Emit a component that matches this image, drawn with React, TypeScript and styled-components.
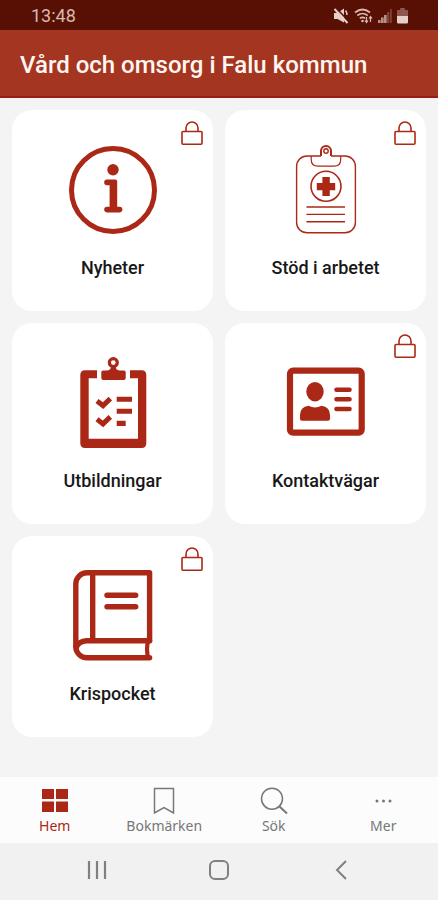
import React from "react";
import styled, { createGlobalStyle } from "styled-components";

const red = "#aa2815";

const GlobalStyle = createGlobalStyle`
  *, *::before, *::after { box-sizing: border-box; }
  body {
    margin: 0;
    background: #f4f4f4;
    font-family: Roboto, "Liberation Sans", sans-serif;
  }
`;

const Page = styled.div`
  min-height: 100vh;
  display: flex;
  flex-direction: column;
`;

const StatusBar = styled.div`
  display: flex;
  align-items: center;
  justify-content: space-between;
  height: 30px;
  padding: 1px 30px 0 31px;
  background: #581004;
  color: #d9b8b0;
  font-size: 18px;
  line-height: 28px;
`;

const StatusIcons = styled.div`
  display: flex;
  align-items: center;
  gap: 5px;
  svg { display: block; }
`;

const Header = styled.header`
  display: flex;
  align-items: center;
  height: 68px;
  padding: 4px 20px 0;
  background: #a43621;
  border-bottom: 2px solid #9c1c10;
`;

const Title = styled.h1`
  margin: 0;
  color: #fff6f2;
  font-size: 24px;
  font-weight: 500;
  line-height: 32px;
  white-space: nowrap;
`;

const Main = styled.main`
  flex: 1;
  padding: 12px;
`;

const Grid = styled.div`
  display: grid;
  grid-template-columns: repeat(2, minmax(0, 1fr));
  gap: 12px;
`;

const Card = styled.a`
  position: relative;
  display: flex;
  flex-direction: column;
  align-items: center;
  min-height: 201px;
  padding: 32px 8px 24px;
  border-radius: 20px;
  background: #fff;
  color: #181818;
  text-decoration: none;
`;

const CardIcon = styled.svg`
  display: block;
  width: 96px;
  height: 96px;
`;

const CardLabel = styled.span`
  margin-top: 18px;
  font-size: 18px;
  font-weight: 500;
  line-height: 24px;
`;

const LockMark = styled.svg`
  position: absolute;
  top: 11px;
  right: 10px;
  width: 22px;
  height: 24px;
`;

const TabBar = styled.nav`
  display: grid;
  grid-template-columns: repeat(4, 1fr);
  height: 66px;
  background: #fcfcfc;
`;

const Tab = styled.a<{ $active?: boolean }>`
  display: flex;
  flex-direction: column;
  align-items: center;
  padding-top: 8px;
  color: ${(p) => (p.$active ? red : "#777")};
  font-family: "Noto Sans", Roboto, sans-serif;
  font-size: 14px;
  line-height: 20px;
  text-decoration: none;
  svg { display: block; margin-bottom: 1px; }
`;

const SystemBar = styled.div`
  display: grid;
  grid-template-columns: repeat(3, 1fr);
  height: 57px;
  padding: 0 36px 3px;
  background: #f1f1f1;
`;

const SystemButton = styled.button`
  display: flex;
  align-items: center;
  justify-content: center;
  padding: 0;
  border: 0;
  background: none;
  color: #808080;
`;

const Lock = () => (
  <LockMark viewBox="0 0 22 24" fill="none" stroke={red} strokeWidth="1.6" role="img" aria-label="Låst">
    <rect x="1" y="10.5" width="20" height="12.7" rx="1" />
    <path d="M5 10.5V7a6 6 0 0 1 12 0v3.5" />
  </LockMark>
);

const InfoIcon = () => (
  <CardIcon viewBox="0 0 96 96" aria-hidden="true">
    <circle cx="48" cy="48" r="41.5" fill="none" stroke={red} strokeWidth="5" />
    <circle cx="48" cy="27.8" r="5.7" fill={red} />
    <path d="M42 37.6h8.4q1.8 0 1.8 1.8v25.4h2.4a2.8 2.8 0 0 1 0 5.6H42a2.8 2.8 0 0 1 0-5.6h2.6V43.2H42a2.8 2.8 0 0 1 0-5.6z" fill={red} />
  </CardIcon>
);

const CareIcon = () => (
  <CardIcon viewBox="0 0 96 96" fill="none" stroke={red} strokeWidth="1.4" aria-hidden="true">
    <path d="M43 14H29A10.4 10.4 0 0 0 18.6 24.4V80.4A10.4 10.4 0 0 0 29 90.8H67A10.4 10.4 0 0 0 77.4 80.4V24.4A10.4 10.4 0 0 0 67 14H53" />
    <path d="M33.2 14v3.5q0 6.7 6.7 6.7H56q6.7 0 6.7-6.7V14" strokeWidth="1.2" />
    <path d="M43 14V9a5 5 0 0 1 10 0v5" strokeWidth="2" />
    <circle cx="48" cy="9" r="2.2" />
    <circle cx="48" cy="44.3" r="15" strokeWidth="1.6" />
    <path d="M44.4 35h7.4v6h5.4v7.3h-5.4V54h-7.4v-5.7h-5.6V41h5.6z" fill={red} stroke="none" />
    <path d="M28.4 65H67M28.4 72.4H67M28.4 79.7H67" />
  </CardIcon>
);

const ChecklistIcon = () => (
  <CardIcon viewBox="0 0 96 96" fill={red} aria-hidden="true">
    <path d="M32 15.3H20q-4.7 0-4.7 4.7V88.3q0 4.7 4.7 4.7H76.6q4.7 0 4.7-4.7V20q0-4.7-4.7-4.7H65v8h8V83.7H23.7V23.3H32z" />
    <circle cx="48.3" cy="7.6" r="4" fill="none" stroke={red} strokeWidth="3.2" />
    <path d="M46 11.500h4.600q.2 4 4.400 4H59q1.700 0 1.700 1.700V23q0 2-2 2H38.300q-2 0-2-2V17.200q0-1.700 1.700-1.700h3.600q4.200 0 4.400-4z" />
    <path d="M32 46l6 4.600 7.300-7M32 64.300l6 4.600 7.300-7" fill="none" stroke={red} strokeWidth="5" />
    <path d="M51.700 41.700H67v5H51.700zM51.700 53.700H67v5H51.700zM51.700 65.700h9v5.300h-9z" />
  </CardIcon>
);

const ContactIcon = () => (
  <CardIcon viewBox="0 0 96 96" fill={red} aria-hidden="true">
    <rect x="12" y="15.700" width="71.700" height="62" rx="3" fill="none" stroke={red} strokeWidth="6.200" />
    <ellipse cx="37" cy="36.700" rx="8.700" ry="9.700" />
    <path d="M30.500 50.800q6.500 3.600 13 0Q52 52 52 60v3.700q0 2-2 2H24q-2 0-2-2V60q0-8 8.500-9.200z" />
    <path d="M58.500 34.700h13M58.500 44.300h13M58.500 54h13" stroke={red} strokeWidth="4.600" strokeLinecap="round" />
  </CardIcon>
);

const BookIcon = () => (
  <CardIcon viewBox="0 0 96 96" fill="none" stroke={red} strokeWidth="5.400" strokeLinecap="round" strokeLinejoin="round" aria-hidden="true">
    <path d="M84.600 72.700V4.800H22A11.200 11.200 0 0 0 10.800 16v63A11 11 0 0 0 21.800 89.700H84.600" />
    <path d="M84.600 72.700H21.500Q14 73 11.400 79" />
    <path d="M82.600 74Q81.400 81 82.600 88.500" strokeWidth="4.200" />
    <path d="M27.700 5v67" />
    <path d="M42 27.300h28.700M42 38.700h28.700" />
  </CardIcon>
);

const cards = [
  { label: "Nyheter", href: "#nyheter", Icon: InfoIcon, locked: true },
  { label: "Stöd i arbetet", href: "#stod", Icon: CareIcon, locked: true },
  { label: "Utbildningar", href: "#utbildningar", Icon: ChecklistIcon, locked: false },
  { label: "Kontaktvägar", href: "#kontakt", Icon: ContactIcon, locked: true },
  { label: "Krispocket", href: "#krispocket", Icon: BookIcon, locked: true },
];

export default function App() {
  return (
    <Page>
      <GlobalStyle />
      <StatusBar>
        <span>13:48</span>
        <StatusIcons>
          <svg width="16" height="16" viewBox="0 0 16 16" aria-hidden="true">
            <path d="M1 5h3.500L11 .5v14L4.500 11H1z" fill="#e6cfc8" />
            <path d="M12.500 2.500q1.500 1.500 1.500 4.500" fill="none" stroke="#e6cfc8" strokeWidth="1.500" />
            <path d="M3 0l12.500 13" stroke="#581004" strokeWidth="1.600" />
            <path d="M1.500 1l13 14" stroke="#e6cfc8" strokeWidth="2" />
          </svg>
          <svg width="19" height="16" viewBox="0 0 19 16" fill="none" stroke="#d9b8b0" strokeWidth="1.700" aria-hidden="true">
            <path d="M1 4.500q7.500-6 15 0M3.300 7.500q5.200-4 10.400 0M5.800 10.400q2.700-2 5.400 0" />
            <circle cx="8.500" cy="13" r="1.300" fill="#d9b8b0" stroke="none" />
            <path d="M12.500 9v5M11 12.500l1.500 2 1.500-2M16.500 14V9M15 10.500l1.500-2 1.500 2" strokeWidth="1.200" />
          </svg>
          <svg width="14" height="16" viewBox="0 0 14 16" fill="#b78f86" aria-hidden="true">
            <path d="M0 12h2.600v3H0zM3 9.500h2.700V15H3zM6 7h2.700v8H6z" />
            <path d="M9 4h2.400v11H9zM12 1h1.800v14H12z" fill="#7d4236" />
          </svg>
          <svg width="11" height="16" viewBox="0 0 12 16" preserveAspectRatio="none" aria-hidden="true">
            <path d="M3.500 0h5v2H11q1 0 1 1v5H0V3q0-1 1-1h2.500z" fill="#8c574c" />
            <path d="M0 8h12v6q0 1.500-1.500 1.500h-9Q0 15.500 0 14z" fill="#e6cfc8" />
          </svg>
        </StatusIcons>
      </StatusBar>
      <Header>
        <Title>Vård och omsorg i Falu kommun</Title>
      </Header>
      <Main>
        <Grid>
          {cards.map(({ label, href, Icon, locked }) => (
            <Card key={label} href={href}>
              <Icon />
              <CardLabel>{label}</CardLabel>
              {locked && <Lock />}
            </Card>
          ))}
        </Grid>
      </Main>
      <TabBar aria-label="Huvudmeny">
        <Tab href="#hem" $active aria-current="page">
          <svg width="30" height="30" viewBox="0 0 30 30" fill={red} aria-hidden="true">
            <path d="M2 4h12v10H2zM16 4h12v10H16zM2 16.500h12v10.500H2zM16 16.500h12v10.500H16z" />
          </svg>
          Hem
        </Tab>
        <Tab href="#bokmarken">
          <svg width="30" height="30" viewBox="0 0 30 30" fill="none" stroke="currentColor" strokeWidth="1.500" aria-hidden="true">
            <path d="M5.500 3.500h19v24.500L15 22.500 5.500 28z" />
          </svg>
          Bokmärken
        </Tab>
        <Tab href="#sok">
          <svg width="30" height="30" viewBox="0 0 30 30" fill="none" stroke="currentColor" strokeWidth="1.500" aria-hidden="true">
            <circle cx="13" cy="13.700" r="10.500" />
            <path d="M20.500 21.500l7.500 7" strokeWidth="2" />
          </svg>
          Sök
        </Tab>
        <Tab href="#mer">
          <svg width="30" height="30" viewBox="0 0 30 30" fill="currentColor" aria-hidden="true">
            <circle cx="9" cy="16" r="1.500" />
            <circle cx="15.500" cy="16" r="1.500" />
            <circle cx="22" cy="16" r="1.500" />
          </svg>
          Mer
        </Tab>
      </TabBar>
      <SystemBar>
        <SystemButton type="button" aria-label="Senaste appar">
          <svg width="20" height="20" viewBox="0 0 20 20" stroke="currentColor" strokeWidth="2.200" aria-hidden="true">
            <path d="M2 1v18M10 1v18M18 1v18" />
          </svg>
        </SystemButton>
        <SystemButton type="button" aria-label="Hemskärm">
          <svg width="20" height="20" viewBox="0 0 20 20" fill="none" stroke="currentColor" strokeWidth="2" aria-hidden="true">
            <rect x="1" y="1" width="18" height="18" rx="5" />
          </svg>
        </SystemButton>
        <SystemButton type="button" aria-label="Tillbaka">
          <svg width="20" height="20" viewBox="0 0 20 20" fill="none" stroke="currentColor" strokeWidth="2" aria-hidden="true">
            <path d="M15 1L6 10l9 9" />
          </svg>
        </SystemButton>
      </SystemBar>
    </Page>
  );
}
